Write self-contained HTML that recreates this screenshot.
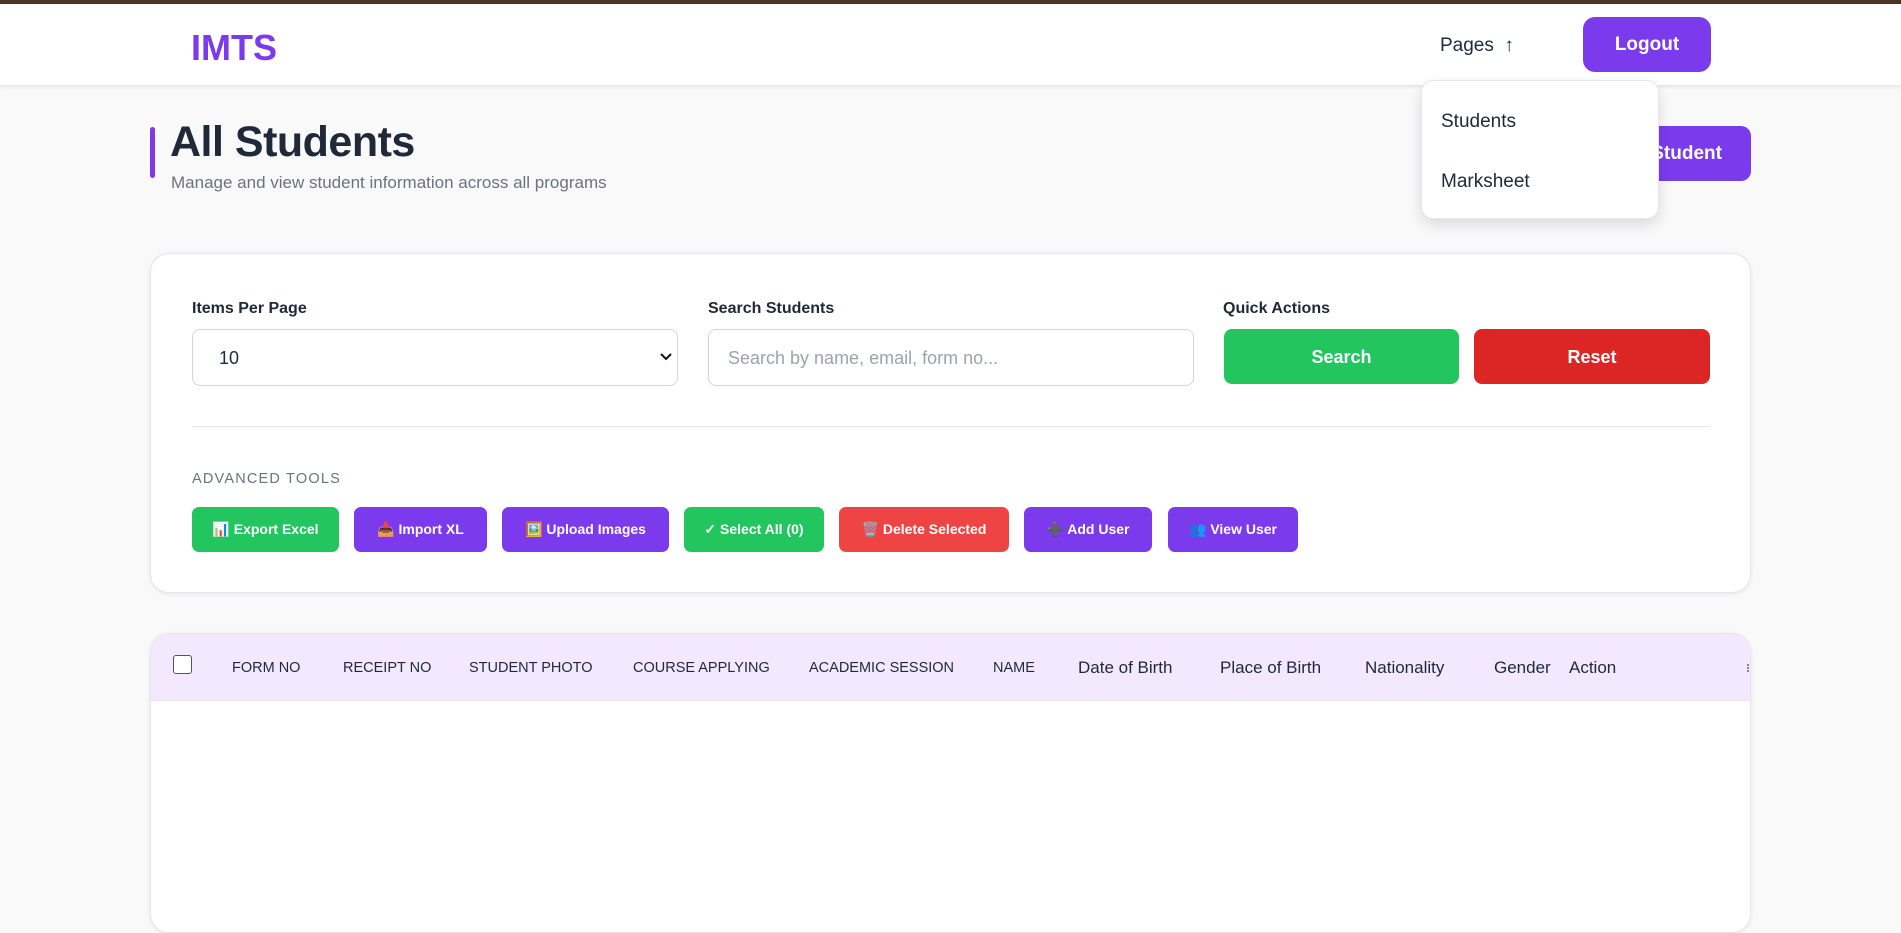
<!DOCTYPE html>
<html><head><meta charset="utf-8"><style>
*{box-sizing:border-box;margin:0;padding:0}
body{width:1901px;height:873px;overflow:hidden;background:#f9f9fa;font-family:"Liberation Sans",Arial,sans-serif;position:relative;color:#1f2937}
.a{position:absolute;white-space:nowrap}
.topbar{left:0;top:0;width:1901px;height:4px;background:#4b3326}
.hdr{left:0;top:4px;width:1901px;height:81px;background:#fff;box-shadow:0 2px 4px rgba(0,0,0,.08)}
.btn{position:absolute;color:#fff;font-weight:bold;display:flex;align-items:center;justify-content:center;white-space:nowrap}
.card{background:#fff;border:1px solid #e5e7eb;border-radius:19px;box-shadow:0 1px 4px rgba(0,0,0,.08)}
.lbl{font-size:16px;font-weight:bold;color:#1f2937;top:300px}
.tb{top:507px;height:45px;border-radius:7px;font-size:14px}
.th{top:660px;font-size:14.5px;color:#1f2937}
.th2{top:658px;font-size:17px;color:#1f2937}
</style></head><body>
<div class="a topbar"></div>
<div class="a hdr"></div>
<div class="a" style="left:191px;top:27px;font-size:36px;font-weight:bold;color:#7c3aed">IMTS</div>
<div class="a" style="left:1440px;top:35px;font-size:19px;color:#1f2937">Pages&nbsp;&nbsp;↑</div>
<div class="btn" style="left:1583px;top:17px;width:128px;height:55px;border-radius:12px;background:#7c3aed;font-size:19px">Logout</div>

<div class="a" style="left:150px;top:127px;width:5px;height:51px;border-radius:3px;background:#7c3aed"></div>
<div class="a" style="left:170px;top:118px;font-size:43px;font-weight:bold;color:#1f2937;letter-spacing:-0.5px">All Students</div>
<div class="a" style="left:171px;top:173px;font-size:17px;color:#6b7280">Manage and view student information across all programs</div>
<div class="btn" style="left:1580px;top:126px;width:171px;height:55px;border-radius:10px;background:#7c3aed;font-size:19px">Add Student</div>

<div class="a" style="left:1421px;top:80px;width:238px;height:139px;background:#fff;border:1px solid #e5e7eb;border-radius:12px;box-shadow:0 6px 14px rgba(0,0,0,.12)"></div>
<div class="a" style="left:1441px;top:111px;font-size:19px;color:#1f2937">Students</div>
<div class="a" style="left:1441px;top:171px;font-size:19px;color:#1f2937">Marksheet</div>

<div class="a card" style="left:150px;top:253px;width:1601px;height:340px"></div>
<div class="a lbl" style="left:192px">Items Per Page</div>
<div class="a lbl" style="left:708px">Search Students</div>
<div class="a lbl" style="left:1223px">Quick Actions</div>
<div class="a" style="left:192px;top:329px;width:486px;height:57px;border:1px solid #d1d5db;border-radius:8px;background:#fff"></div>
<div class="a" style="left:219px;top:348px;font-size:18px">10</div>
<svg class="a" style="left:660px;top:353px" width="12" height="8" viewBox="0 0 12 8"><path d="M1 1l5 5 5-5" stroke="#111" stroke-width="2" fill="none"/></svg>
<div class="a" style="left:708px;top:329px;width:486px;height:57px;border:1px solid #d1d5db;border-radius:8px;background:#fff"></div>
<div class="a" style="left:728px;top:348px;font-size:18px;color:#9ca3af">Search by name, email, form no...</div>
<div class="btn" style="left:1224px;top:329px;width:235px;height:55px;border-radius:8px;background:#22c55e;font-size:18px;padding-top:2px">Search</div>
<div class="btn" style="left:1474px;top:329px;width:236px;height:55px;border-radius:8px;background:#dc2626;font-size:18px;padding-top:2px">Reset</div>
<div class="a" style="left:192px;top:426px;width:1518px;height:1px;background:#e5e7eb"></div>
<div class="a" style="left:192px;top:471px;font-size:14.5px;color:#6b7280;letter-spacing:1.2px">ADVANCED TOOLS</div>
<div class="btn tb" style="left:192px;width:147px;background:#22c55e">📊 Export Excel</div>
<div class="btn tb" style="left:354px;width:133px;background:#7c3aed">📥 Import XL</div>
<div class="btn tb" style="left:502px;width:167px;background:#7c3aed">🖼️ Upload Images</div>
<div class="btn tb" style="left:684px;width:140px;background:#22c55e">✓ Select All (0)</div>
<div class="btn tb" style="left:839px;width:170px;background:#ef4444">🗑️ Delete Selected</div>
<div class="btn tb" style="left:1024px;width:128px;background:#7c3aed">➕ Add User</div>
<div class="btn tb" style="left:1168px;width:130px;background:#7c3aed">👥 View User</div>

<div class="a card" style="left:150px;top:633px;width:1601px;height:300px;overflow:hidden">
<div style="height:67px;background:#f3e8ff;border-bottom:1px solid #e5e7eb"></div></div>
<div class="a" style="left:173px;top:655px;width:19px;height:19px;border:1.5px solid #555;border-radius:3px;background:#fff"></div>
<div class="a th" style="left:232px">FORM NO</div>
<div class="a th" style="left:343px">RECEIPT NO</div>
<div class="a th" style="left:469px">STUDENT PHOTO</div>
<div class="a th" style="left:633px">COURSE APPLYING</div>
<div class="a th" style="left:809px">ACADEMIC SESSION</div>
<div class="a th" style="left:993px">NAME</div>
<div class="a th2" style="left:1078px">Date of Birth</div>
<div class="a th2" style="left:1220px">Place of Birth</div>
<div class="a th2" style="left:1365px">Nationality</div>
<div class="a th2" style="left:1494px;width:57px;overflow:hidden">Gender</div>
<div class="a th2" style="left:1569px">Action</div>
<div class="a" style="left:1747px;top:664px;width:2px;height:8px;border-left:2px dotted #888"></div>
</body></html>
